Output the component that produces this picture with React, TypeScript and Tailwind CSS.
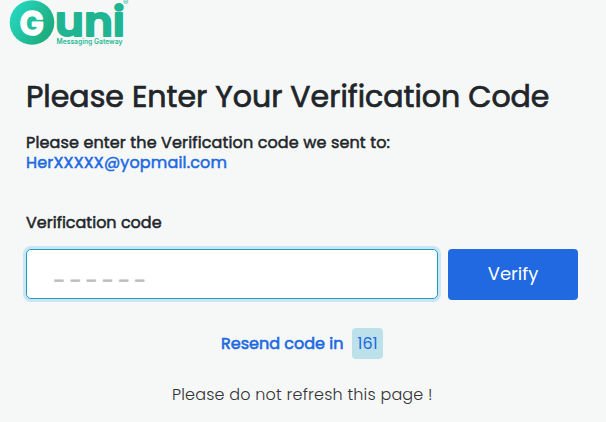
function Logo() {
  return (
    <svg width="134" height="50" viewBox="0 0 134 50" className="block" role="img" aria-label="Guni Messaging Gateway">
      <defs>
        <linearGradient id="disc" x1="0" y1="0.2" x2="1" y2="0.8">
          <stop offset="0" stopColor="#27d9c2" />
          <stop offset="1" stopColor="#1ba777" />
        </linearGradient>
      </defs>
      <circle cx="32" cy="22.5" r="22.3" fill="url(#disc)" />
      <g fontFamily="Poppins, Inter, sans-serif" fontWeight="600">
        <text x="19.5" y="34.5" fontSize="33" fontFamily="Inter, sans-serif" fontWeight="700" fill="#fff" stroke="#fff" strokeWidth="1.6" strokeLinejoin="round" textLength="24.5" lengthAdjust="spacingAndGlyphs">G</text>
        <text x="55" y="36" fontSize="40" fill="#1fb592" stroke="#1fb592" strokeWidth="1.8" strokeLinejoin="round" textLength="70" lengthAdjust="spacingAndGlyphs">uni</text>
        <text x="56.5" y="43.8" fontSize="7" fontFamily="Inter, sans-serif" fill="#2ab895" textLength="66" lengthAdjust="spacingAndGlyphs">Messaging Gateway</text>
        <text x="123" y="4.5" fontSize="8" fontFamily="Inter, sans-serif" fontWeight="400" fill="#2ab895">®</text>
      </g>
    </svg>
  );
}

export default function App() {
  return (
    <main className="h-[422px] w-[606px] overflow-hidden bg-[#f6f8f8] font-[Poppins,Inter,sans-serif] text-[#212529]">
      <Logo />
      <div className="flex flex-col pl-[26px] pr-7">
        <h1 className="mt-[27px] h-10 whitespace-nowrap text-[30px] font-normal leading-10 [-webkit-text-stroke:0.7px]">
          <span>Please Enter Your Verification Code</span>
        </h1>
        <p className="mt-4 whitespace-nowrap text-[16px] font-normal leading-5 tracking-[0.13px] [-webkit-text-stroke:0.5px]">
          <span>Please enter the Verification code we sent to:</span>
          <br />
          <span className="tracking-[0.16px] text-[#2069e0]">HerXXXXX@yopmail.com</span>
        </p>
        <label htmlFor="code" className="mt-10 whitespace-nowrap text-[16px] font-normal leading-5 [-webkit-text-stroke:0.5px]">
          <span>Verification code</span>
        </label>
        <div className="mt-4 flex gap-[10px]">
          <input
            id="code"
            placeholder="_ _ _ _ _ _"
            className="h-[50px] w-[412px] rounded-[5px] border border-[#17a2b8] bg-white px-[26px] pb-0.5 text-[16px] tracking-[0.08px] shadow-[0_0_0_3px_#cce5f6] outline-none placeholder:text-[#bdbdbd] placeholder:[-webkit-text-stroke:0.8px]"
          />
          <button className="h-[51px] w-[130px] rounded-[4px] bg-[#2069e0] pb-0.5 text-[18px] text-white">
            <span>Verify</span>
          </button>
        </div>
        <div className="mt-7 flex h-[31px] items-center gap-2 pl-[195px] text-[16px] text-[#2069e0]">
          <span className="w-[123px] whitespace-nowrap [-webkit-text-stroke:0.6px]">Resend code in</span>
          <span className="flex h-[31px] w-[31px] items-center justify-center rounded-[4px] bg-[#bce1ea]">161</span>
        </div>
        <p className="mt-[26px] pl-[146px] text-[16px] font-light leading-5 tracking-[0.19px] text-[#333]">
          <span className="whitespace-nowrap">Please do not refresh this page !</span>
        </p>
      </div>
    </main>
  );
}
